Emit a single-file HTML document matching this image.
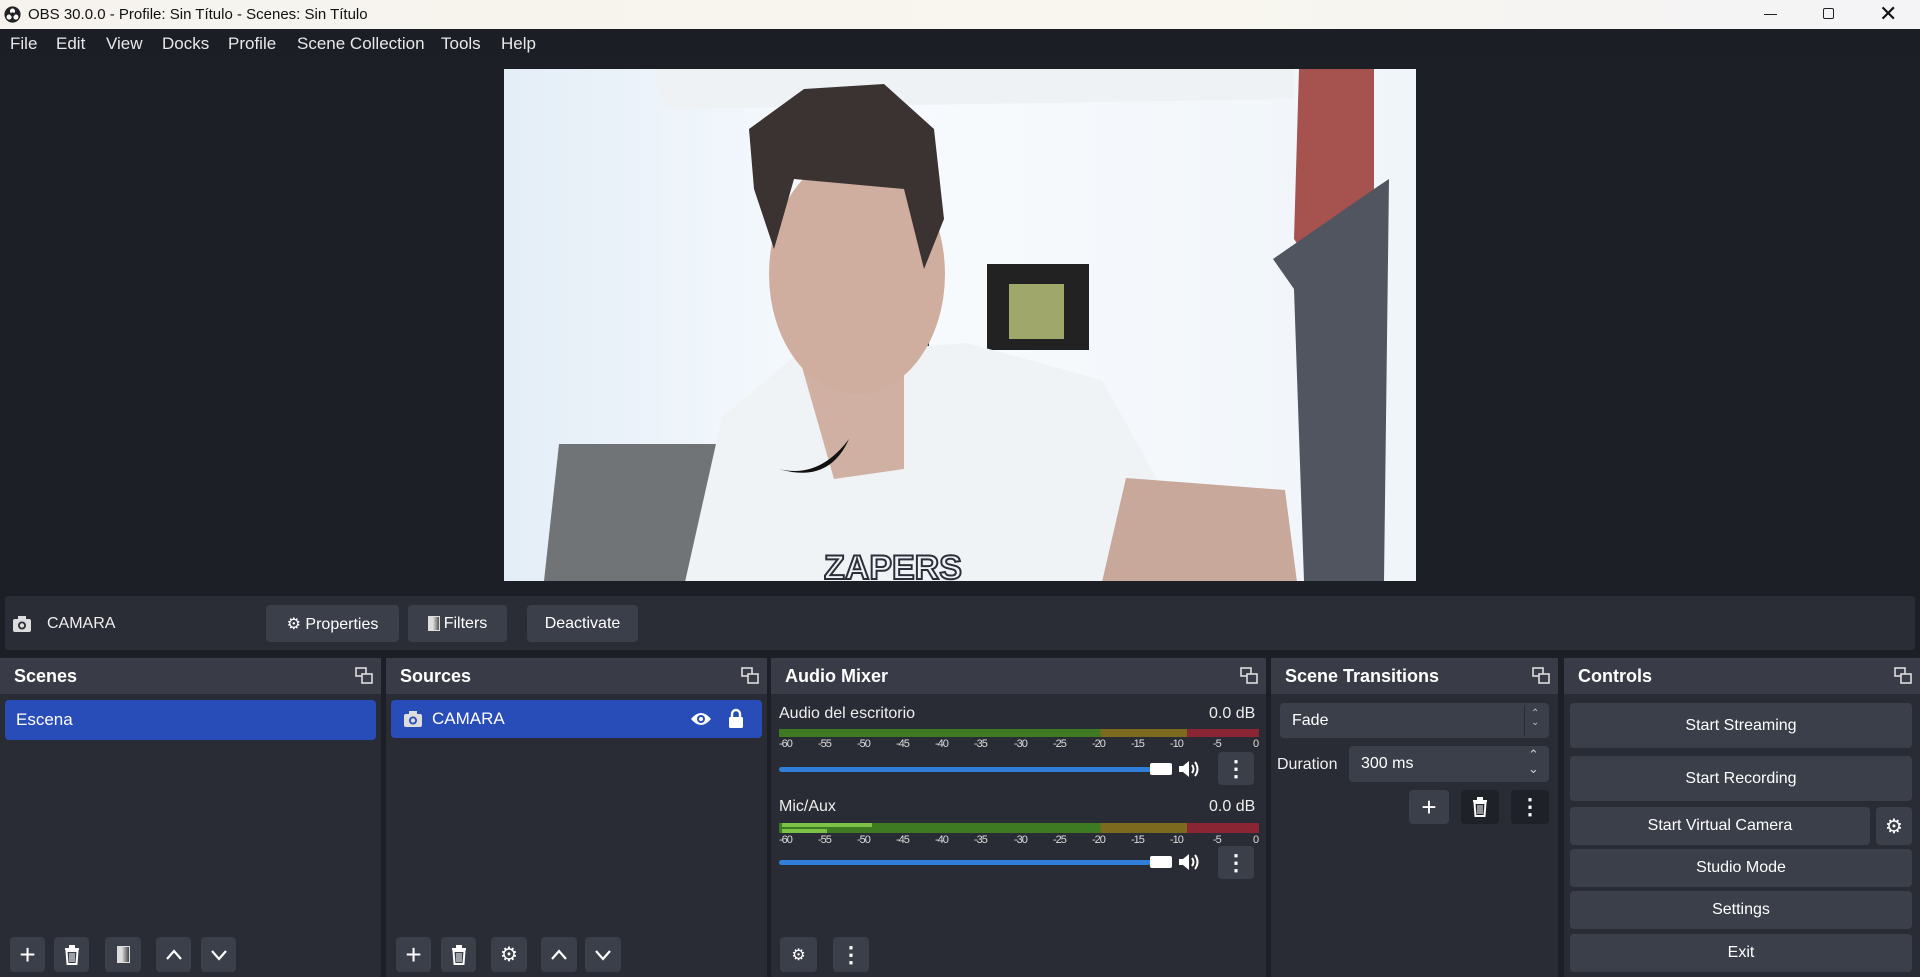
<!DOCTYPE html>
<html><head><meta charset="utf-8"><style>
*{box-sizing:border-box;margin:0;padding:0}
body{width:1920px;height:977px;overflow:hidden;background:#1d1f26;font-family:"Liberation Sans",sans-serif;color:#fff;position:relative;font-size:16px}
.a{position:absolute}
.title{left:0;top:0;width:1920px;height:29px;background:linear-gradient(90deg,#f6f3ef,#f8f6ee 60%,#f4f3f6);color:#111;font-size:15px}
.menu{left:0;top:29px;width:1920px;height:29px;background:#1c1e25;font-size:17px;color:#e8e8ea}
.menu span{position:absolute;top:5px}
.bar{background:#2a2d36;border-radius:3px}
.btn{position:absolute;background:#3b3f4a;border-radius:4px;color:#fff;display:flex;align-items:center;justify-content:center;font-size:16px}
.dock{position:absolute;top:658px;height:319px;background:#2a2c35;border-radius:3px 3px 0 0}
.hd{position:absolute;left:0;top:0;right:0;height:36px;background:#393c47;font-weight:bold;font-size:18px;padding:8px 0 0 14px}
.fl{position:absolute;right:8px;top:9px;width:18px;height:18px}
.sel{position:absolute;background:#284cb8;border-radius:4px;font-size:17px;display:flex;align-items:center}
.sm{position:absolute;font-size:16px;color:#eee}
.tk{position:absolute;font-size:11px;color:#ddd;letter-spacing:-1px}
</style></head><body>

<div class="a title">
<svg class="a" style="left:4px;top:6px" width="17" height="17" viewBox="0 0 20 20"><circle cx="10" cy="10" r="9.5" fill="#222"/><circle cx="10" cy="6" r="3" fill="#fff"/><circle cx="6" cy="13" r="3" fill="#fff"/><circle cx="14" cy="13" r="3" fill="#fff"/><circle cx="10" cy="10" r="2.5" fill="#222"/></svg>
<span class="a" style="left:28px;top:6px">OBS 30.0.0 - Profile: Sin Título - Scenes: Sin Título</span>
<div class="a" style="left:1764px;top:14px;width:13px;height:1.3px;background:#222"></div>
<div class="a" style="left:1823px;top:8px;width:11px;height:11px;border:1.3px solid #222;border-radius:2px"></div>
<span class="a" style="left:1879px;top:1px;font-size:22px">&#10005;</span>
</div>
<div class="a menu">
<span style="left:10px">File</span><span style="left:56px">Edit</span><span style="left:106px">View</span><span style="left:162px">Docks</span><span style="left:228px">Profile</span><span style="left:297px">Scene Collection</span><span style="left:441px">Tools</span><span style="left:501px">Help</span>
</div>

<svg class="a" style="left:504px;top:69px" width="912" height="512" viewBox="0 0 912 512">
<defs><linearGradient id="w" x1="0" x2="1"><stop offset="0" stop-color="#e4eef7"/><stop offset=".4" stop-color="#f8fbfe"/><stop offset="1" stop-color="#f0f5f9"/></linearGradient></defs>
<rect width="912" height="512" fill="url(#w)"/>
<polygon points="150,0 790,0 790,30 160,40" fill="#eef2f5"/>
<polygon points="795,0 870,0 870,120 810,200 790,170" fill="#a6524f"/>
<polygon points="769,190 870,120 885,110 880,512 800,512 790,220" fill="#505560"/>
<rect x="270" y="350" width="70" height="162" fill="#bdb2ac"/>
<polygon points="55,375 215,375 200,512 40,512" fill="#707477"/>
<rect x="483" y="195" width="102" height="86" fill="#222"/>
<rect x="505" y="215" width="55" height="55" fill="#9fa86a"/>
<rect x="385" y="190" width="40" height="135" fill="#3a3533"/>
<polygon points="181,513 218,348 291,287 463,274 598,311 659,421 634,513" fill="#f0f3f5"/>
<polygon points="622,409 781,421 793,513 598,513" fill="#c9a89c"/>
<polygon points="290,270 400,270 400,400 330,410" fill="#cfb0a3"/>
<ellipse cx="353" cy="205" rx="88" ry="120" fill="#cfae9f"/>
<polygon points="245,60 300,20 380,15 430,60 440,150 420,200 400,120 290,110 270,180 250,120" fill="#3b3331"/>
<path d="M275,400 q40,10 70,-30 q-20,45 -70,30z" fill="#111"/>
<text x="320" y="510" font-size="34" font-family="Liberation Sans" font-weight="bold" fill="none" stroke="#2c2f3a" stroke-width="2">ZAPERS</text>
</svg>

<div class="a bar" style="left:5px;top:596px;width:1910px;height:54px"></div>
<svg class="a" style="left:13px;top:616px" width="18" height="16" viewBox="0 0 18 16"><rect x="0" y="3" width="18" height="13" rx="2" fill="#ddd"/><rect x="5" y="0" width="8" height="4" fill="#ddd"/><circle cx="9" cy="9.5" r="4" fill="#2a2d36"/><circle cx="9" cy="9.5" r="2.2" fill="#ddd"/></svg>
<span class="sm" style="left:47px;top:615px">CAMARA</span>
<div class="btn" style="left:266px;top:605px;width:133px;height:37px">&#9881;&#xFE0E;&nbsp;Properties</div>
<div class="btn" style="left:408px;top:605px;width:99px;height:37px"><span style="display:inline-block;width:12px;height:15px;border:1.5px solid #ddd;background:linear-gradient(90deg,#ddd 40%,#555);margin-right:4px"></span>Filters</div>
<div class="btn" style="left:527px;top:605px;width:111px;height:37px">Deactivate</div>

<div class="dock" style="left:0;width:381px"><div class="hd">Scenes</div>
<svg class="fl" viewBox="0 0 18 18"><rect x="1" y="1" width="10" height="8" fill="none" stroke="#ddd" stroke-width="1.6"/><rect x="7" y="7" width="10" height="9" fill="#393c47" stroke="#ddd" stroke-width="1.6"/></svg></div>
<div class="sel" style="left:5px;top:700px;width:371px;height:40px;padding-left:11px">Escena</div>

<div class="dock" style="left:386px;width:381px"><div class="hd">Sources</div>
<svg class="fl" viewBox="0 0 18 18"><rect x="1" y="1" width="10" height="8" fill="none" stroke="#ddd" stroke-width="1.6"/><rect x="7" y="7" width="10" height="9" fill="#393c47" stroke="#ddd" stroke-width="1.6"/></svg></div>
<div class="sel" style="left:391px;top:700px;width:371px;height:38px;padding-left:41px">CAMARA</div>
<svg class="a" style="left:404px;top:711px" width="18" height="16" viewBox="0 0 18 16"><rect x="0" y="3" width="18" height="13" rx="2" fill="#ddd"/><rect x="5" y="0" width="8" height="4" fill="#ddd"/><circle cx="9" cy="9.5" r="4" fill="#284cb8"/><circle cx="9" cy="9.5" r="2.2" fill="#ddd"/></svg>
<svg class="a" style="left:690px;top:710px" width="22" height="18" viewBox="0 0 22 18"><path d="M1,9 Q11,-3 21,9 Q11,21 1,9z" fill="#fff"/><circle cx="11" cy="9" r="4" fill="#284cb8"/><circle cx="11" cy="9" r="2" fill="#fff"/></svg>
<svg class="a" style="left:728px;top:708px" width="16" height="20" viewBox="0 0 16 20"><path d="M4,9 V6 a4,4 0 0 1 8,0 V9" fill="none" stroke="#fff" stroke-width="2.4"/><rect x="1" y="9" width="14" height="11" rx="1.5" fill="#fff"/></svg>

<div class="dock" style="left:771px;width:495px"><div class="hd">Audio Mixer</div>
<svg class="fl" viewBox="0 0 18 18"><rect x="1" y="1" width="10" height="8" fill="none" stroke="#ddd" stroke-width="1.6"/><rect x="7" y="7" width="10" height="9" fill="#393c47" stroke="#ddd" stroke-width="1.6"/></svg></div>
<span class="sm" style="left:779px;top:705px">Audio del escritorio</span>
<span class="sm" style="left:1209px;top:705px">0.0 dB</span>
<div class="a" style="left:779px;top:729px;width:480px;height:8px;background:linear-gradient(90deg,#3e7a21 0,#3e7a21 67%,#7c6a1e 67%,#7c6a1e 85%,#8a2633 85%)"></div>
<span class="sm" style="left:1209px;top:798px">0.0 dB</span>
<span class="sm" style="left:779px;top:798px">Mic/Aux</span>
<div class="a" style="left:779px;top:823px;width:480px;height:10px;background:linear-gradient(90deg,#3e7a21 0,#3e7a21 67%,#7c6a1e 67%,#7c6a1e 85%,#8a2633 85%)"></div>
<div class="a" style="left:782px;top:823px;width:90px;height:4px;background:#7cc247"></div>
<div class="a" style="left:782px;top:829px;width:45px;height:4px;background:#7cc247"></div>
<div class="a" style="left:779px;top:767px;width:393px;height:5px;background:#2f7ed8;border-radius:3px"></div>
<div class="a" style="left:1150px;top:763px;width:22px;height:12px;background:#fff;border-radius:2px"></div>
<div class="a" style="left:779px;top:860px;width:393px;height:5px;background:#2f7ed8;border-radius:3px"></div>
<div class="a" style="left:1150px;top:856px;width:22px;height:12px;background:#fff;border-radius:2px"></div>
<svg class="a" style="left:1178px;top:759px" width="22" height="20" viewBox="0 0 22 20"><path d="M1,7 h4 l6,-5 v16 l-6,-5 h-4z" fill="#fff"/><path d="M14,6 q3,4 0,8 M17,3 q5,7 0,14" fill="none" stroke="#fff" stroke-width="2"/></svg>
<svg class="a" style="left:1178px;top:852px" width="22" height="20" viewBox="0 0 22 20"><path d="M1,7 h4 l6,-5 v16 l-6,-5 h-4z" fill="#fff"/><path d="M14,6 q3,4 0,8 M17,3 q5,7 0,14" fill="none" stroke="#fff" stroke-width="2"/></svg>
<div class="btn" style="left:1218px;top:752px;width:36px;height:33px;font-size:22px;font-weight:bold">&#8942;</div>
<div class="btn" style="left:1218px;top:846px;width:36px;height:33px;font-size:22px;font-weight:bold">&#8942;</div>
<div class="btn" style="left:780px;top:937px;width:37px;height:35px">&#9881;&#xFE0E;</div>
<div class="btn" style="left:833px;top:937px;width:36px;height:35px;font-size:22px;font-weight:bold">&#8942;</div>

<div class="dock" style="left:1271px;width:287px"><div class="hd">Scene Transitions</div>
<svg class="fl" viewBox="0 0 18 18"><rect x="1" y="1" width="10" height="8" fill="none" stroke="#ddd" stroke-width="1.6"/><rect x="7" y="7" width="10" height="9" fill="#393c47" stroke="#ddd" stroke-width="1.6"/></svg></div>
<div class="btn" style="left:1280px;top:703px;width:269px;height:35px;justify-content:flex-start;padding-left:12px">Fade</div>
<div class="a" style="left:1524px;top:705px;width:1px;height:31px;background:#2a2c35"></div>
<span class="a" style="left:1531px;top:709px;font-size:10px;color:#bbb;line-height:9px">&#8963;<br>&#8964;</span>
<span class="sm" style="left:1277px;top:756px">Duration</span>
<div class="btn" style="left:1349px;top:746px;width:200px;height:36px;justify-content:flex-start;padding-left:12px">300 ms</div>
<span class="a" style="left:1528px;top:748px;font-size:13px;color:#ccc;line-height:14px">&#8963;<br>&#8964;</span>
<div class="btn" style="left:1409px;top:790px;width:40px;height:34px;font-size:26px">+</div>
<div class="btn" style="left:1461px;top:790px;width:38px;height:34px;background:#1f2128"><svg width="16" height="20" viewBox="0 0 16 20"><rect x="1" y="3" width="14" height="2" fill="#fff"/><rect x="5" y="0" width="6" height="3" fill="#fff"/><path d="M2.5,6 h11 l-1,13 h-9z" fill="none" stroke="#fff" stroke-width="2"/><path d="M6,8 v9 M8,8 v9 M10,8 v9" stroke="#fff" stroke-width="1"/></svg></div>
<div class="btn" style="left:1511px;top:790px;width:38px;height:34px;background:#1f2128;font-size:22px;font-weight:bold">&#8942;</div>

<div class="dock" style="left:1564px;width:356px"><div class="hd">Controls</div>
<svg class="fl" viewBox="0 0 18 18"><rect x="1" y="1" width="10" height="8" fill="none" stroke="#ddd" stroke-width="1.6"/><rect x="7" y="7" width="10" height="9" fill="#393c47" stroke="#ddd" stroke-width="1.6"/></svg></div>
<div class="btn" style="left:1570px;top:703px;width:342px;height:45px">Start Streaming</div>
<div class="btn" style="left:1570px;top:756px;width:342px;height:45px">Start Recording</div>
<div class="btn" style="left:1570px;top:807px;width:300px;height:38px">Start Virtual Camera</div>
<div class="btn" style="left:1876px;top:807px;width:36px;height:38px;font-size:20px">&#9881;&#xFE0E;</div>
<div class="btn" style="left:1570px;top:849px;width:342px;height:38px">Studio Mode</div>
<div class="btn" style="left:1570px;top:891px;width:342px;height:38px">Settings</div>
<div class="btn" style="left:1570px;top:934px;width:342px;height:38px">Exit</div>

<div class="btn" style="left:10px;top:937px;width:35px;height:35px;font-size:28px">+</div>
<div class="btn" style="left:54px;top:937px;width:35px;height:35px"><svg width="16" height="20" viewBox="0 0 16 20"><rect x="1" y="3" width="14" height="2" fill="#fff"/><rect x="5" y="0" width="6" height="3" fill="#fff"/><path d="M2.5,6 h11 l-1,13 h-9z" fill="none" stroke="#fff" stroke-width="2"/><path d="M6,8 v9 M8,8 v9 M10,8 v9" stroke="#fff" stroke-width="1"/></svg></div>
<div class="btn" style="left:105px;top:937px;width:36px;height:35px"><span style="display:inline-block;width:13px;height:17px;border:1.5px solid #ddd;background:linear-gradient(90deg,#ddd 35%,#444)"></span></div>
<div class="btn" style="left:156px;top:937px;width:35px;height:35px"><svg width="18" height="12" viewBox="0 0 18 12"><path d="M2,10 L9,2 L16,10" fill="none" stroke="#fff" stroke-width="2.2"/></svg></div>
<div class="btn" style="left:201px;top:937px;width:35px;height:35px"><svg width="18" height="12" viewBox="0 0 18 12"><path d="M2,2 L9,10 L16,2" fill="none" stroke="#fff" stroke-width="2.2"/></svg></div>

<div class="btn" style="left:396px;top:937px;width:35px;height:35px;font-size:28px">+</div>
<div class="btn" style="left:441px;top:937px;width:35px;height:35px"><svg width="16" height="20" viewBox="0 0 16 20"><rect x="1" y="3" width="14" height="2" fill="#fff"/><rect x="5" y="0" width="6" height="3" fill="#fff"/><path d="M2.5,6 h11 l-1,13 h-9z" fill="none" stroke="#fff" stroke-width="2"/><path d="M6,8 v9 M8,8 v9 M10,8 v9" stroke="#fff" stroke-width="1"/></svg></div>
<div class="btn" style="left:491px;top:937px;width:36px;height:35px;font-size:20px">&#9881;&#xFE0E;</div>
<div class="btn" style="left:541px;top:937px;width:36px;height:35px"><svg width="18" height="12" viewBox="0 0 18 12"><path d="M2,10 L9,2 L16,10" fill="none" stroke="#fff" stroke-width="2.2"/></svg></div>
<div class="btn" style="left:585px;top:937px;width:36px;height:35px"><svg width="18" height="12" viewBox="0 0 18 12"><path d="M2,2 L9,10 L16,2" fill="none" stroke="#fff" stroke-width="2.2"/></svg></div>

<div class="tk" style="left:779px;top:738px;width:480px;height:14px">
<span class="a" style="left:0">-60</span><span class="a" style="left:39px">-55</span><span class="a" style="left:78px">-50</span><span class="a" style="left:117px">-45</span><span class="a" style="left:156px">-40</span><span class="a" style="left:195px">-35</span><span class="a" style="left:235px">-30</span><span class="a" style="left:274px">-25</span><span class="a" style="left:313px">-20</span><span class="a" style="left:352px">-15</span><span class="a" style="left:391px">-10</span><span class="a" style="left:434px">-5</span><span class="a" style="left:474px">0</span></div>
<div class="tk" style="left:779px;top:834px;width:480px;height:14px">
<span class="a" style="left:0">-60</span><span class="a" style="left:39px">-55</span><span class="a" style="left:78px">-50</span><span class="a" style="left:117px">-45</span><span class="a" style="left:156px">-40</span><span class="a" style="left:195px">-35</span><span class="a" style="left:235px">-30</span><span class="a" style="left:274px">-25</span><span class="a" style="left:313px">-20</span><span class="a" style="left:352px">-15</span><span class="a" style="left:391px">-10</span><span class="a" style="left:434px">-5</span><span class="a" style="left:474px">0</span></div>
</body></html>
